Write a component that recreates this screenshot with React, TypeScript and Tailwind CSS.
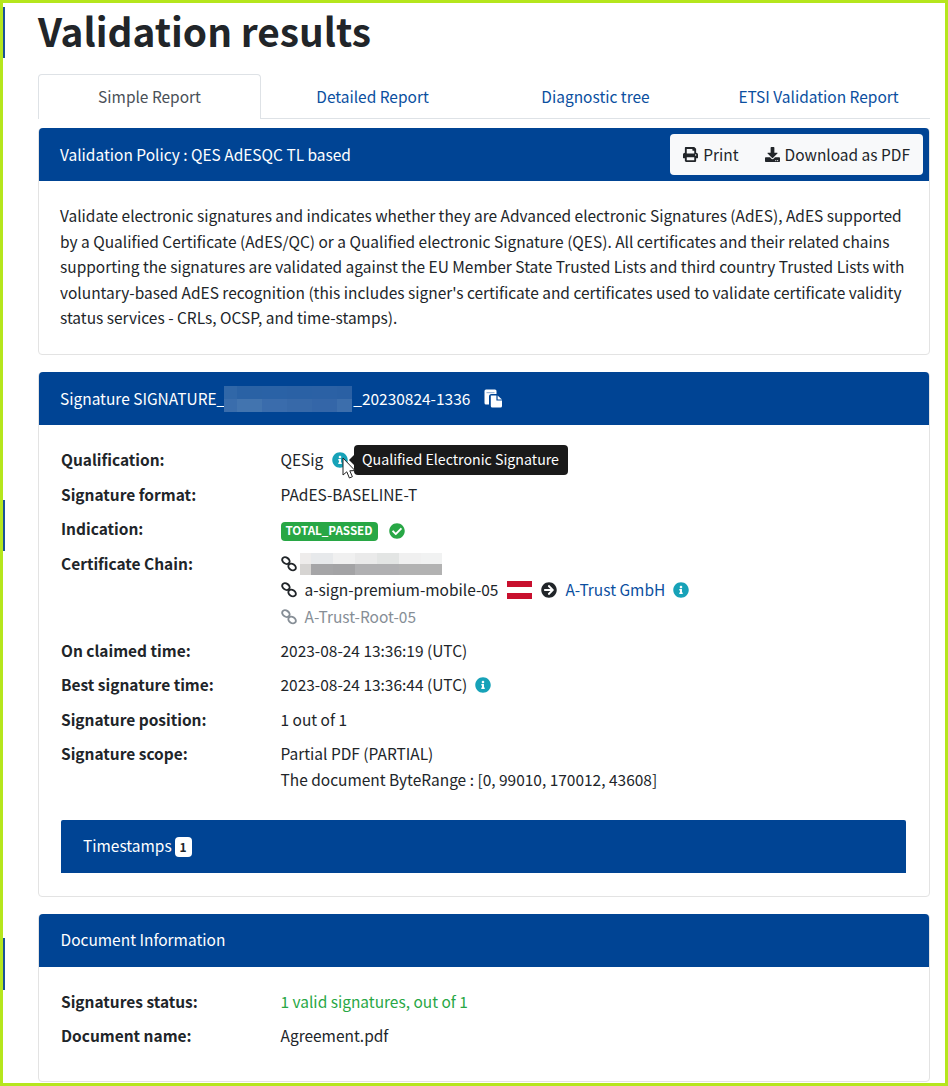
import React from "react";
import { FaPrint, FaDownload, FaInfoCircle, FaCheckCircle, FaArrowCircleRight } from "react-icons/fa";

const font = { fontFamily: '"Noto Sans CJK SC", "Noto Sans", sans-serif' };

function Row({ label, children, className }: { label: string; children: React.ReactNode; className?: string }) {
  return (
    <div className={"flex " + (className ?? "")}>
      <div className="w-[219.5px] shrink-0 font-bold">{label}</div>
      <div className="min-w-0">{children}</div>
    </div>
  );
}

const Info = ({ className }: { className?: string }) => <FaInfoCircle className={"inline-block text-[#17a2b8] text-[16px] " + (className ?? "")} />;

const Chain = () => (
  <svg width="16" height="16" viewBox="0 0 16 16" fill="none" stroke="currentColor" strokeWidth="1.9" className="shrink-0">
    <ellipse cx="4.9" cy="4.6" rx="4" ry="3" transform="rotate(35 4.9 4.6)" />
    <ellipse cx="11.1" cy="11" rx="4" ry="3" transform="rotate(35 11.1 11)" />
  </svg>
);

const CopyIcon = () => (
  <svg width="19" height="19" viewBox="0 0 19 19" className="ml-[14px] shrink-0">
    <path d="M0.5 2 a1.5 1.5 0 0 1 1.5-1.5 H11 a1.5 1.5 0 0 1 1.5 1.5 V5 H7.5 a2.5 2.5 0 0 0-2.5 2.5 V15.5 H2 a1.5 1.5 0 0 1-1.5-1.5 Z" fill="#fff" />
    <rect x="2.5" y="3" width="8" height="1.2" fill="#9db8d8" />
    <path d="M6.8 6.6 H12.4 V11.6 H18 V17 a1.5 1.5 0 0 1-1.5 1.5 H8.3 a1.5 1.5 0 0 1-1.5-1.5 Z" fill="#fff" />
    <path d="M13.6 6.6 L18 10.6 H13.6 Z" fill="#fff" />
  </svg>
);

export default function App() {
  return (
    <div className="relative h-[1086px] w-[948px] overflow-hidden border-[3px] border-[#b5e61d] bg-white text-[15.47px] leading-[25.6px] text-[#212529]" style={font}>
      <div className="absolute left-0 top-[4px] h-[51px] w-[2px] bg-[#1a5298]" />
      <div className="absolute left-0 top-[497px] h-[51px] w-[2px] bg-[#1a5298]" />
      <div className="absolute left-0 top-[935px] h-[52px] w-[2px] bg-[#1a5298]" />
      <div className="ml-[35px] w-[892px]">
        <h1 className="h-[71px] pt-[3px] text-[38.8px] font-bold leading-[48px]">Validation results</h1>
        <div className="flex h-[45px] border-b border-[#dee2e6]">
          <div className="flex h-[45px] w-[223px] items-center justify-center rounded-t border border-b-0 border-[#dee2e6] bg-white text-[#495057]">Simple Report</div>
          <div className="flex h-[45px] w-[223px] items-center justify-center text-[#0b4f9f]">Detailed Report</div>
          <div className="flex h-[45px] w-[223px] items-center justify-center text-[#0b4f9f]">Diagnostic tree</div>
          <div className="flex h-[45px] w-[223px] items-center justify-center text-[#0b4f9f]">ETSI Validation Report</div>
        </div>

        <section className="mt-[9px] h-[227px] rounded border border-[#e3e3e3]">
          <div className="-mt-px flex h-[53px] items-center justify-between rounded-t bg-[#004494] pl-[21px] pr-[6px] text-white">
            <span>Validation Policy : QES AdESQC TL based</span>
            <div className="flex h-[41px] items-center gap-[26px] rounded bg-[#f8f9fa] px-[13px] text-[#212529]">
              <span className="flex items-center gap-[5px]"><FaPrint className="text-[15px]" />Print</span>
              <span className="flex items-center gap-[5px]"><FaDownload className="text-[15px]" />Download as PDF</span>
            </div>
          </div>
          <p className="px-[21px] pt-[22px]">
            Validate electronic signatures and indicates whether they are Advanced electronic Signatures (AdES), AdES supported by a Qualified Certificate (AdES/QC) or a Qualified electronic Signature (QES). All certificates and their related chains supporting the signatures are validated against the EU Member State Trusted Lists and third country Trusted Lists with voluntary-based AdES recognition (this includes signer's certificate and certificates used to validate certificate validity status services - CRLs, OCSP, and time-stamps).
          </p>
        </section>

        <section className="mt-[17px] h-[525px] rounded border border-[#e3e3e3]">
          <div className="-mt-px flex h-[53px] items-center rounded-t bg-[#004494] pl-[21px] text-white">
            <span>Signature SIGNATURE_</span>
            <span className="-ml-[1px] mr-[1px] flex h-[26px] w-[128px] shrink-0 flex-col overflow-hidden">
              <span className="flex h-[13px]">
                <span className="w-[13px] bg-[#3067a8]" /><span className="w-[25px] bg-[#2a62a5]" /><span className="w-[25px] bg-[#2a62a6]" /><span className="w-[25px] bg-[#2a61a5]" /><span className="w-[25px] bg-[#2b61a5]" /><span className="w-[15px] bg-[#2a60a4]" />
              </span>
              <span className="flex h-[13px]">
                <span className="w-[13px] bg-[#3a6dac]" /><span className="w-[25px] bg-[#4274af]" /><span className="w-[25px] bg-[#3a6cac]" /><span className="w-[25px] bg-[#3769a9]" /><span className="w-[25px] bg-[#3466a8]" /><span className="w-[15px] bg-[#3c6eac]" />
              </span>
            </span>
            <span>_20230824-1336</span>
            <CopyIcon />
          </div>

          <div className="pl-[22px] pr-[23px] pt-[22px]">
            <Row label="Qualification:" className="h-[34.5px]">
              <span className="relative inline-flex items-center">
                QESig
                <Info className="ml-[8.5px]" />
                <span className="absolute left-[73px] top-[-2px] flex h-[30px] w-[214px] items-center justify-center whitespace-nowrap rounded bg-[#1a1a1a] text-[14.2px] text-white">
                  <span className="absolute -left-[5px] top-[10px] h-0 w-0 border-y-[5px] border-r-[5px] border-y-transparent border-r-[#1a1a1a]" />
                  Qualified Electronic Signature
                </span>
                <svg className="absolute left-[60px] top-[10px]" width="17" height="25" viewBox="0 0 17 25">
                  <path d="M2 1 L2 18 L5.8 14.8 L8.4 21 L11.4 19.7 L8.8 13.8 L14 13.6 Z" fill="#fff" stroke="#222" strokeWidth="1" strokeLinejoin="round" />
                </svg>
              </span>
            </Row>
            <Row label="Signature format:" className="h-[34.5px]">PAdES-BASELINE-T</Row>
            <Row label="Indication:" className="h-[34.5px]">
              <span className="flex h-[27px] items-center pt-[3px]">
                <span className="flex h-[19px] w-[97px] items-center justify-center rounded bg-[#28a745] text-[11.6px] font-bold leading-none text-white">TOTAL_PASSED</span>
                <FaCheckCircle className="ml-[11px] text-[16px] text-[#28a745]" />
              </span>
            </Row>
            <Row label="Certificate Chain:">
              <div className="flex h-[26px] items-center">
                <Chain />
                <span className="ml-[3px] flex h-[22px] w-[142px] flex-col overflow-hidden">
                  <span className="flex h-[11px]">
                    <span className="w-[11px] bg-[#eeeceb]" /><span className="w-[22px] bg-[#e7e9eb]" /><span className="w-[22px] bg-[#f0f0f0]" /><span className="w-[22px] bg-[#eaeaea]" /><span className="w-[22px] bg-[#e3e5e4]" /><span className="w-[22px] bg-[#f0f0f0]" /><span className="w-[21px] bg-[#f1f2f2]" />
                  </span>
                  <span className="flex h-[11px]">
                    <span className="w-[11px] bg-[#d6d4d2]" /><span className="w-[22px] bg-[#a5a5a7]" /><span className="w-[22px] bg-[#a3a3a5]" /><span className="w-[22px] bg-[#b0b0b2]" /><span className="w-[22px] bg-[#b0b0b2]" /><span className="w-[22px] bg-[#b2b2b2]" /><span className="w-[21px] bg-[#b2b2b2]" />
                  </span>
                </span>
              </div>
              <div className="flex h-[27px] items-center">
                <Chain />
                <span className="ml-[8px]">a-sign-premium-mobile-05</span>
                <span className="ml-[9px] flex h-[18px] w-[25px] flex-col">
                  <span className="h-[6px] bg-[#c8102e]" /><span className="h-[6px] bg-white" /><span className="h-[6px] bg-[#c8102e]" />
                </span>
                <FaArrowCircleRight className="ml-[8.5px] text-[16px]" />
                <span className="ml-[8.5px] text-[#0b4f9f]">A-Trust GmbH</span>
                <Info className="ml-[8px]" />
              </div>
              <div className="flex h-[27px] items-center text-[#868e96]">
                <Chain />
                <span className="ml-[8px]">A-Trust-Root-05</span>
              </div>
            </Row>
            <Row label="On claimed time:" className="mt-[7px] h-[34.5px]">2023-08-24 13:36:19 (UTC)</Row>
            <Row label="Best signature time:" className="h-[34.5px]">
              <span className="flex items-center">2023-08-24 13:36:44 (UTC)<Info className="ml-[8px]" /></span>
            </Row>
            <Row label="Signature position:" className="h-[34.5px]">1 out of 1</Row>
            <Row label="Signature scope:">Partial PDF (PARTIAL)<br />The document ByteRange : [0, 99010, 170012, 43608]</Row>
            <div className="mt-[28px] flex h-[53px] items-center rounded-t-[2px] bg-[#004494] pl-[22px] text-white">
              <span className="-translate-y-px">Timestamps</span>
              <span className="ml-[3px] flex h-[20px] w-[17px] items-center justify-center rounded bg-white text-[12px] font-bold leading-none text-[#212529]">1</span>
            </div>
          </div>
        </section>

        <section className="mt-[17px] h-[168px] rounded border border-[#e3e3e3]">
          <div className="-mt-px flex h-[53px] items-center rounded-t bg-[#004494] pl-[21.5px] text-white">
            <span className="-translate-y-px">Document Information</span>
          </div>
          <div className="pl-[22px] pr-[23px] pt-[22px]">
            <Row label="Signatures status:" className="h-[34px]"><span className="text-[#28a745]">1 valid signatures, out of 1</span></Row>
            <Row label="Document name:">Agreement.pdf</Row>
          </div>
        </section>
      </div>
    </div>
  );
}
